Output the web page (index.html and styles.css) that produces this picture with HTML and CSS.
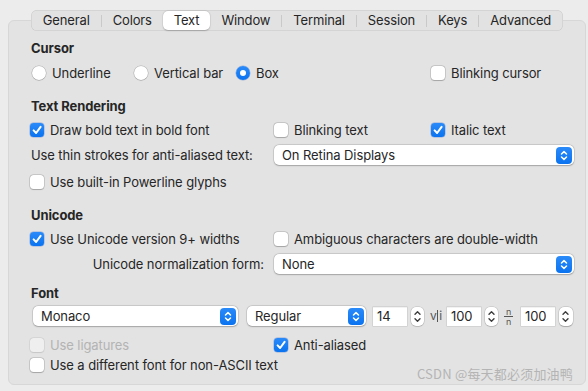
FILE: index.html
```html
<!DOCTYPE html>
<html>
<head>
<meta charset="utf-8">
<link rel="stylesheet" href="styles.css">
</head>
<body>
<div class="window">
  <div class="tabs">
    <span class="tab">General</span><span class="sep"></span>
    <span class="tab">Colors</span>
    <span class="tab selected">Text</span>
    <span class="tab">Window</span><span class="sep"></span>
    <span class="tab">Terminal</span><span class="sep"></span>
    <span class="tab">Session</span><span class="sep"></span>
    <span class="tab">Keys</span><span class="sep"></span>
    <span class="tab">Advanced</span>
  </div>
  <div class="panel">
    <div class="heading first">Cursor</div>
    <div class="row cursor-row">
      <label class="opt"><span class="radio"></span>Underline</label>
      <label class="opt"><span class="radio"></span>Vertical bar</label>
      <label class="opt"><span class="radio on"></span>Box</label>
      <label class="opt"><span class="check"></span>Blinking cursor</label>
    </div>

    <div class="heading">Text Rendering</div>
    <div class="row grid r-after-h">
      <label class="opt"><span class="check on"><svg viewBox="0 0 14 14"><path d="M3.6 7.4 L6.1 10 L10.6 3.9"/></svg></span>Draw bold text in bold font</label>
      <label class="opt"><span class="check"></span>Blinking text</label>
      <label class="opt"><span class="check on"><svg viewBox="0 0 14 14"><path d="M3.6 7.4 L6.1 10 L10.6 3.9"/></svg></span>Italic text</label>
    </div>
    <div class="row grid r-popup">
      <span class="label">Use thin strokes for anti-aliased text:</span>
      <div class="popup wide"><span>On Retina Displays</span><span class="pbtn"><svg viewBox="0 0 16 17"><path d="M5.5 7 L8 4.6 L10.5 7 M5.5 10 L8 12.4 L10.5 10"/></svg></span></div>
    </div>
    <div class="row r-after-popup">
      <label class="opt"><span class="check"></span>Use built-in Powerline glyphs</label>
    </div>

    <div class="heading">Unicode</div>
    <div class="row grid r-after-h">
      <label class="opt"><span class="check on"><svg viewBox="0 0 14 14"><path d="M3.6 7.4 L6.1 10 L10.6 3.9"/></svg></span>Use Unicode version 9+ widths</label>
      <label class="opt span2"><span class="check"></span>Ambiguous characters are double-width</label>
    </div>
    <div class="row grid r-popup">
      <span class="label right">Unicode normalization form:</span>
      <div class="popup wide"><span>None</span><span class="pbtn"><svg viewBox="0 0 16 17"><path d="M5.5 7 L8 4.6 L10.5 7 M5.5 10 L8 12.4 L10.5 10"/></svg></span></div>
    </div>

    <div class="heading font-h">Font</div>
    <div class="row font-row">
      <div class="popup monaco"><span>Monaco</span><span class="pbtn"><svg viewBox="0 0 16 17"><path d="M5.5 7 L8 4.6 L10.5 7 M5.5 10 L8 12.4 L10.5 10"/></svg></span></div>
      <div class="popup weight"><span>Regular</span><span class="pbtn"><svg viewBox="0 0 16 17"><path d="M5.5 7 L8 4.6 L10.5 7 M5.5 10 L8 12.4 L10.5 10"/></svg></span></div>
      <span class="field size">14</span>
      <span class="stepper"><svg viewBox="0 0 13 19"><path d="M4 7.2 L6.5 4.7 L9 7.2 M4 11.8 L6.5 14.3 L9 11.8"/></svg></span>
      <span class="glyph vi">v<span class="bar"></span>i</span>
      <span class="field">100</span>
      <span class="stepper"><svg viewBox="0 0 13 19"><path d="M4 7.2 L6.5 4.7 L9 7.2 M4 11.8 L6.5 14.3 L9 11.8"/></svg></span>
      <span class="glyph nn"><span class="n">n</span><span class="line"></span><span class="n">n</span></span>
      <span class="field">100</span>
      <span class="stepper"><svg viewBox="0 0 13 19"><path d="M4 7.2 L6.5 4.7 L9 7.2 M4 11.8 L6.5 14.3 L9 11.8"/></svg></span>
    </div>
    <div class="row grid r-lig">
      <label class="opt disabled"><span class="check"></span>Use ligatures</label>
      <label class="opt"><span class="check on"><svg viewBox="0 0 14 14"><path d="M3.6 7.4 L6.1 10 L10.6 3.9"/></svg></span>Anti-aliased</label>
    </div>
    <div class="row">
      <label class="opt"><span class="check"></span>Use a different font for non-ASCII text</label>
    </div>
  </div>
  <div class="watermark">CSDN @每天都必须加油鸭</div>
</div>
</body>
</html>
```
FILE: styles.css
```css
* { box-sizing: border-box; }
html, body { margin: 0; padding: 0; }
body {
  width: 588px;
  height: 391px;
  overflow: hidden;
  background: #ececec;
  font-family: Inter, "Noto Sans", "Noto Sans CJK SC", sans-serif;
  font-size: 13px;
  letter-spacing: -0.1px;
  color: #262626;
}
.window {
  position: relative;
  height: 391px;
  padding: 10px 2px 0 8px;
  display: flex;
  flex-direction: column;
}
.tabs {
  align-self: center;
  position: relative;
  z-index: 2;
  height: 21px;
  display: flex;
  align-items: center;
  background: #e2e2e2;
  border-radius: 6px;
  box-shadow: 0 0 0 0.5px rgba(0,0,0,0.12) inset;
  padding: 0 1px;
}
.tab {
  height: 19px;
  line-height: 19px;
  padding: 0 11px;
  font-size: 13px;
  letter-spacing: -0.15px;
  color: #262626;
  white-space: nowrap;
}
.tab.selected {
  background: #fff;
  border-radius: 5px;
  box-shadow: 0 0.5px 1.5px rgba(0,0,0,0.22), 0 0 0 0.5px rgba(0,0,0,0.06);
}
.sep {
  width: 1px;
  height: 12px;
  background: #c9c9c9;
}
.panel {
  margin-top: -11px;
  background: #e3e3e3;
  border: 1px solid #d7d7d7;
  border-radius: 6px;
  padding: 19px 11px 9px 21px;
}
.heading {
  font-weight: 700;
  height: 16px;
  line-height: 16px;
  margin-top: 15px;
  padding-left: 1px;
}
.heading.first { margin-top: 0; }
.heading.font-h { margin-top: 11px; }
.row {
  height: 20px;
  display: flex;
  align-items: center;
}
.cursor-row {
  margin-top: 7px;
  display: grid;
  grid-template-columns: 102px 102px 195px 1fr;
  padding-left: 2px;
}
.grid {
  display: grid;
  grid-template-columns: 244px 157px 1fr;
  align-items: center;
}
.r-after-h { margin-top: 6px; }
.r-popup { margin-top: 5px; }
.r-after-popup { margin-top: 7px; }
.r-lig { margin-top: 9px; }
.span2 { grid-column: 2 / 4; }
.opt {
  display: flex;
  align-items: center;
  gap: 6px;
  white-space: nowrap;
}
.opt.disabled { color: #b3b3b3; }
.opt.disabled .check { opacity: 0.45; }
.label { padding-left: 1px; white-space: nowrap; }
.label.right { text-align: right; padding-right: 10px; }
.check, .radio {
  flex: none;
  width: 14px;
  height: 14px;
  background: #fff;
  box-shadow: 0 0 0 0.5px rgba(0,0,0,0.22), 0 0.5px 1px rgba(0,0,0,0.18);
  display: flex;
  align-items: center;
  justify-content: center;
}
.check { border-radius: 3.5px; }
.radio { border-radius: 50%; }
.check.on, .radio.on {
  background: linear-gradient(#2a8af9, #0b73f0);
  box-shadow: 0 0 0 0.5px rgba(0,70,200,0.35);
}
.radio.on::after {
  content: "";
  width: 6px;
  height: 6px;
  border-radius: 50%;
  background: #fff;
}
.check svg { width: 14px; height: 14px; }
.check path {
  fill: none;
  stroke: #fff;
  stroke-width: 2;
  stroke-linecap: round;
  stroke-linejoin: round;
}
.popup {
  height: 20px;
  background: #fff;
  border-radius: 5px;
  box-shadow: 0 0 0 0.5px rgba(0,0,0,0.16), 0 0.5px 1.5px rgba(0,0,0,0.22);
  display: flex;
  align-items: center;
  justify-content: space-between;
  padding: 0 2px 0 8px;
}
.popup.wide { grid-column: 2 / 4; }
.pbtn {
  width: 16px;
  height: 17px;
  border-radius: 4px;
  background: linear-gradient(#2a8af9, #0b73f0);
  display: flex;
}
.pbtn svg { width: 16px; height: 17px; }
.pbtn path, .stepper path {
  fill: none;
  stroke-width: 1.5;
  stroke-linecap: round;
  stroke-linejoin: round;
}
.pbtn path { stroke: #fff; }
.font-row { margin-top: 5px; padding-left: 3px; }
.popup.monaco { width: 205px; margin-right: 9px; }
.popup.weight { width: 119px; margin-right: 7px; }
.field {
  width: 34px;
  height: 19px;
  background: #fff;
  box-shadow: 0 0 0 0.5px rgba(0,0,0,0.14), inset 0 0.5px 0 rgba(0,0,0,0.1);
  padding-left: 4px;
  line-height: 19px;
  margin-right: 4px;
}
.stepper {
  width: 13px;
  height: 19px;
  background: #fff;
  border-radius: 5px;
  box-shadow: 0 0 0 0.5px rgba(0,0,0,0.16), 0 0.5px 1px rgba(0,0,0,0.2);
  display: flex;
  margin-right: 6px;
}
.stepper:last-child { margin-right: 0; width: 14px; }
.stepper svg { width: 13px; height: 19px; }
.stepper path { stroke: #3c3c3c; stroke-width: 1.4; }
.glyph { color: #555; font-size: 12px; }
.vi {
  display: inline-flex;
  align-items: center;
  width: 12px;
  margin-right: 5px;
  line-height: 1;
}
.vi .bar {
  width: 1px;
  height: 12px;
  background: #555;
  margin: 0 1px 0 0.5px;
}
.nn {
  display: inline-flex;
  flex-direction: column;
  align-items: center;
  width: 9px;
  margin-right: 8px;
}
.nn .n {
  font-size: 9px;
  line-height: 9px;
  height: 9px;
}
.nn .line {
  width: 9px;
  height: 1px;
  background: #555;
}
.watermark {
  position: absolute;
  right: 15px;
  bottom: 8px;
  font-family: "Noto Sans CJK SC", sans-serif;
  font-size: 13px;
  color: #b4b4b4;
  letter-spacing: 0.2px;
}
```
